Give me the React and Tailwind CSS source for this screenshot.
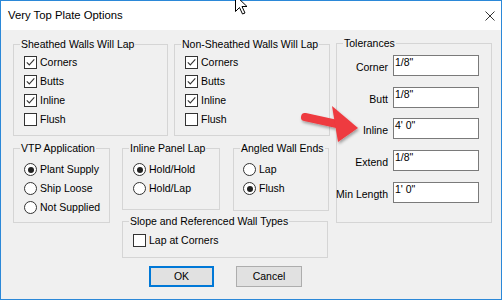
import React from "react";

function Check({ checked, label }) {
  return (
    <div className="flex items-center h-[19px]">
      <span className="w-[13px] h-[13px] border border-[#333] bg-white flex items-center justify-center shrink-0">
        {checked && (
          <svg width="11" height="11" viewBox="0 0 11 11">
            <path d="M1.8 5.3 L4.3 7.9 L9.3 2.4" stroke="#333" strokeWidth="1.1" fill="none" />
          </svg>
        )}
      </span>
      <span className="ml-[3px] whitespace-nowrap">{label}</span>
    </div>
  );
}

function Radio({ checked, label }) {
  return (
    <div className="flex items-center h-[19px]">
      <span className="w-[13px] h-[13px] rounded-full border border-[#333] bg-white flex items-center justify-center shrink-0">
        {checked && <span className="w-[6px] h-[6px] rounded-full bg-[#222]" />}
      </span>
      <span className="ml-[3px] whitespace-nowrap">{label}</span>
    </div>
  );
}

function Group({ title, className, children }) {
  return (
    <fieldset className={`border border-[#d5d5d5] ${className}`}>
      <legend className="ml-[6px] px-[1px] leading-[14px] whitespace-nowrap">{title}</legend>
      {children}
    </fieldset>
  );
}

function Field({ label, value }) {
  return (
    <div className="flex items-start">
      <div className="w-[51px] flex justify-end pt-[6px] leading-[13px]">
        <span className="whitespace-nowrap">{label}</span>
      </div>
      <div className="ml-[5px] w-[86px] h-[21px] border border-[#7a7a7a] bg-white pl-[1px] leading-[13px] whitespace-nowrap">
        {value}
      </div>
    </div>
  );
}

export default function App() {
  return (
    <div className="relative w-[503px] h-[301px] bg-white font-['Liberation_Sans',Arial,sans-serif] text-[10.5px] leading-[13px] text-black overflow-hidden">
      <div className="w-[502px] h-[300px] border border-[#2b88d8] flex flex-col">
        <div className="h-[29px] bg-white flex items-center justify-between pl-[7px]">
          <span className="text-[11.3px]">Very Top Plate Options</span>
          <svg width="10" height="10" viewBox="0 0 10 10" className="mr-[6px]">
            <path d="M0.5 0.5 L9.5 9.5 M9.5 0.5 L0.5 9.5" stroke="#333" strokeWidth="1" />
          </svg>
        </div>
        <div className="flex-1 bg-[#f0f0f0] flex pl-[12px] pt-[6px]">
          <div className="flex flex-col w-[317px] mt-[1px]">
            <div className="flex gap-[6px]">
              <Group title="Sheathed Walls Will Lap" className="w-[155px] h-[99px]">
                <div className="mt-[2px] pl-[10px]">
                  <Check checked label="Corners" />
                  <Check checked label="Butts" />
                  <Check checked label="Inline" />
                  <Check label="Flush" />
                </div>
              </Group>
              <Group title="Non-Sheathed Walls Will Lap" className="w-[156px] h-[99px]">
                <div className="mt-[2px] pl-[10px]">
                  <Check checked label="Corners" />
                  <Check checked label="Butts" />
                  <Check checked label="Inline" />
                  <Check label="Flush" />
                </div>
              </Group>
            </div>
            <div className="flex mt-[5px]">
              <Group title="VTP Application" className="w-[97px] h-[82px]">
                <div className="mt-[5px] pl-[10px]">
                  <Radio checked label="Plant Supply" />
                  <Radio label="Ship Loose" />
                  <Radio label="Not Supplied" />
                </div>
              </Group>
              <div className="ml-[12px] w-[207px] flex flex-col">
                <div className="flex gap-[13px]">
                  <Group title="Inline Panel Lap" className="w-[98px] h-[69px]">
                    <div className="mt-[5px] pl-[10px]">
                      <Radio checked label="Hold/Hold" />
                      <Radio label="Hold/Lap" />
                    </div>
                  </Group>
                  <Group title="Angled Wall Ends" className="w-[96px] h-[70px]">
                    <div className="mt-[5px] pl-[9px]">
                      <Radio label="Lap" />
                      <Radio checked label="Flush" />
                    </div>
                  </Group>
                </div>
                <Group title="Slope and Referenced Wall Types" className="mt-[3px] w-[206px] h-[44px]">
                  <div className="mt-[3px] pl-[10px]">
                    <Check label="Lap at Corners" />
                  </div>
                </Group>
              </div>
            </div>
            <div className="flex mt-[8px] ml-[136px] gap-[22px]">
              <div className="w-[65px] h-[21px] bg-[#e1e1e1] border border-[#0078d7] shadow-[inset_0_0_0_1px_#0078d7] flex items-center justify-center">
                OK
              </div>
              <div className="w-[66px] h-[21px] bg-[#e1e1e1] border border-[#adadad] flex items-center justify-center">
                Cancel
              </div>
            </div>
          </div>
          <Group title="Tolerances" className="ml-[6px] w-[156px] h-[187px]">
            <div className="flex flex-col mt-[5px] gap-[10.7px]">
              <Field label="Corner" value={'1/8"'} />
              <Field label="Butt" value={'1/8"'} />
              <Field label="Inline" value={"4' 0\""} />
              <Field label="Extend" value={'1/8"'} />
              <Field label="Min Length" value={"1' 0\""} />
            </div>
          </Group>
        </div>
      </div>

      <svg className="absolute left-0 top-0 pointer-events-none" width="503" height="301" viewBox="0 0 503 301">
        <defs>
          <filter id="sh" x="-20%" y="-20%" width="140%" height="140%">
            <feDropShadow dx="1" dy="2" stdDeviation="1.5" floodColor="#000" floodOpacity="0.35" />
          </filter>
        </defs>
        <g filter="url(#sh)">
          <line x1="305" y1="117" x2="337" y2="124" stroke="#ee3a3f" strokeWidth="8" strokeLinecap="round" />
          <polygon points="332,106 358,128 338,142" fill="#ee3a3f" />
        </g>
        <path
          transform="translate(235.5,-4.5)"
          d="M0 0 L0 16 L4 12 L7 18.5 L9.5 17.5 L6.5 11 L11.5 11 Z"
          fill="#fff"
          stroke="#000"
          strokeWidth="1"
          strokeLinejoin="round"
        />
      </svg>
    </div>
  );
}
